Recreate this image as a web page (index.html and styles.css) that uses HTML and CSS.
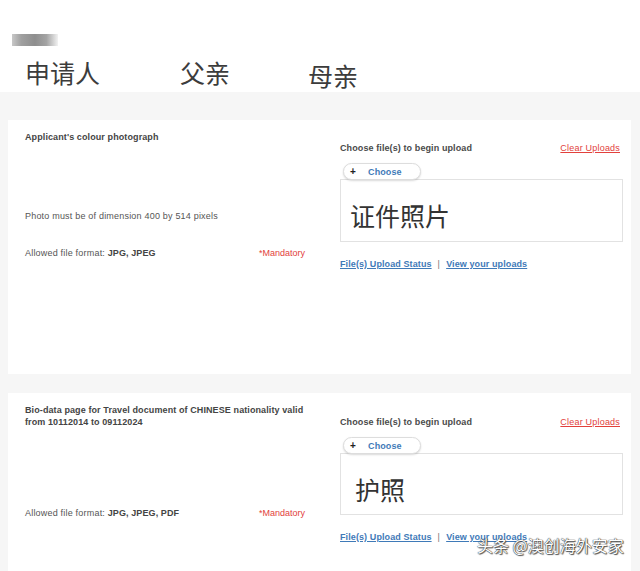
FILE: index.html
```html
<!DOCTYPE html>
<html lang="zh">
<head>
  <meta charset="UTF-8" />
  <meta name="viewport" content="width=device-width, initial-scale=1.0"/>
  <title>Upload documents</title>
  <link rel="stylesheet" href="styles.css">
</head>
<body>
  <!-- Header with tabs -->
  <div class="top-bar">
    <div class="blurred-name"></div>
    <div class="tabs">
      <div class="tab tab-applicant">申请人</div>
      <div class="tab tab-father">父亲</div>
      <div class="tab tab-mother">母亲</div>
    </div>
  </div>

  <!-- Upload cards -->
  <div class="cards">
    <div class="upload-card card-photo">
      <div class="card-left">
        <div class="doc-title">Applicant's colour photograph</div>
        <div class="doc-note">Photo must be of dimension 400 by 514 pixels</div>
        <div class="format-row">
          <span>Allowed file format: <b>JPG, JPEG</b></span>
          <span class="mandatory">*Mandatory</span>
        </div>
      </div>
      <div class="card-right">
        <div class="upload-head">
          <span class="upload-label">Choose file(s) to begin upload</span>
          <a href="#" class="clear-link">Clear Uploads</a>
        </div>
        <div class="choose-btn"><span class="plus">+</span><span class="choose-text">Choose</span></div>
        <div class="drop-box"><span class="drop-text">证件照片</span></div>
        <div class="status-links">
          <a href="#">File(s) Upload Status</a>
          <span class="sep">|</span>
          <a href="#">View your uploads</a>
        </div>
      </div>
    </div>

    <div class="upload-card card-passport">
      <div class="card-left">
        <div class="doc-title">Bio-data page for Travel document of CHINESE nationality valid from 10112014 to 09112024</div>
        <div class="format-row">
          <span>Allowed file format: <b>JPG, JPEG, PDF</b></span>
          <span class="mandatory">*Mandatory</span>
        </div>
      </div>
      <div class="card-right">
        <div class="upload-head">
          <span class="upload-label">Choose file(s) to begin upload</span>
          <a href="#" class="clear-link">Clear Uploads</a>
        </div>
        <div class="choose-btn"><span class="plus">+</span><span class="choose-text">Choose</span></div>
        <div class="drop-box"><span class="drop-text">护照</span></div>
        <div class="status-links">
          <a href="#">File(s) Upload Status</a>
          <span class="sep">|</span>
          <a href="#">View your uploads</a>
        </div>
      </div>
    </div>
  </div>

  <div class="watermark">头条 @澳创海外安家</div>
</body>
</html>
```

FILE: styles.css
```css
* {
  margin: 0;
  padding: 0;
  box-sizing: border-box;
}

body {
  font-family: 'Liberation Sans', Arial, 'Noto Sans CJK SC', sans-serif;
  background: #f6f6f6;
  color: #555;
  font-size: 9px;
  letter-spacing: 0.2px;
  overflow: hidden;
}

b, .doc-title, .upload-label, .status-links a, .choose-text {
  letter-spacing: 0.1px;
}

.top-bar {
  background: #fff;
  height: 92px;
  padding: 34px 0 0 12px;
}

.blurred-name {
  width: 46px;
  height: 12px;
  background: linear-gradient(to right, #c8c8c8 0%, #a0a0a0 20%, #8e8e8e 50%, #a4a4a4 75%, #f2f2f2 100%);
}

.tabs {
  display: flex;
  margin-top: 12px;
  padding-left: 13px;
  font-family: 'Noto Sans CJK SC', sans-serif;
  font-size: 25px;
  line-height: 28px;
  letter-spacing: 0;
  color: #3c3c3c;
}

.tab-father {
  margin-left: 80px;
}

.tab-mother {
  margin-left: 78px;
  margin-top: 3px;
}

.cards {
  padding: 28px 9px 0 8px;
}

.upload-card {
  background: #fff;
  display: flex;
  padding-left: 17px;
}

.card-photo {
  height: 254px;
  margin-bottom: 19px;
}

.card-passport {
  height: 200px;
}

.card-left {
  width: 285px;
  display: flex;
  flex-direction: column;
  padding-top: 11px;
  line-height: 12px;
}

.doc-title {
  font-weight: bold;
  color: #444;
}

.doc-note {
  margin-top: 67px;
}

.card-photo .format-row {
  margin-top: 25px;
}

.card-passport .format-row {
  margin-top: 79px;
}

.format-row {
  display: flex;
  justify-content: space-between;
  padding-right: 5px;
}

.format-row b {
  color: #444;
}

.mandatory {
  color: #e2413c;
  letter-spacing: 0;
}

.card-right {
  margin-left: 30px;
  width: 283px;
  padding-top: 23px;
}

.card-photo .card-right {
  padding-top: 22px;
}

.upload-head {
  display: flex;
  justify-content: space-between;
  line-height: 12px;
  padding-right: 3px;
}

.upload-label {
  font-weight: bold;
  color: #4a4a4a;
}

.clear-link {
  color: #e2413c;
}

.choose-btn {
  display: flex;
  align-items: center;
  width: 78px;
  height: 17px;
  margin: 9px 0 -1px 3px;
  border: 1px solid #ddd;
  border-radius: 9px;
  background: #fff;
  box-shadow: 0 1px 2px rgba(0, 0, 0, 0.15);
  position: relative;
  z-index: 1;
}

.plus {
  font-weight: bold;
  color: #222;
  font-size: 10px;
  margin-left: 6px;
}

.choose-text {
  color: #3f7ab8;
  font-weight: bold;
  margin-left: 12px;
}

.drop-box {
  height: 63px;
  border: 1px solid #e2e2e2;
  padding: 22px 0 0 9px;
}

.card-passport .drop-box {
  height: 62px;
  padding-left: 14px;
}

.drop-text {
  font-family: 'Noto Sans CJK SC', sans-serif;
  font-size: 25px;
  line-height: 26px;
  letter-spacing: 0;
  color: #333;
  display: block;
}

.status-links {
  margin-top: 16px;
  line-height: 12px;
  display: flex;
  gap: 6px;
}

.status-links a {
  color: #3f7ab8;
  font-weight: bold;
}

.sep {
  color: #777;
}

/* watermark sits on top of the screenshot */
.watermark {
  position: absolute;
  left: 477px;
  top: 535px;
  font-family: 'Noto Sans CJK SC', sans-serif;
  font-size: 16px;
  line-height: 20px;
  letter-spacing: 0;
  color: #fff;
  text-shadow: 0 0 1px #333, 0 0 1px #333, 1px 1px 1px #555;
}
```
